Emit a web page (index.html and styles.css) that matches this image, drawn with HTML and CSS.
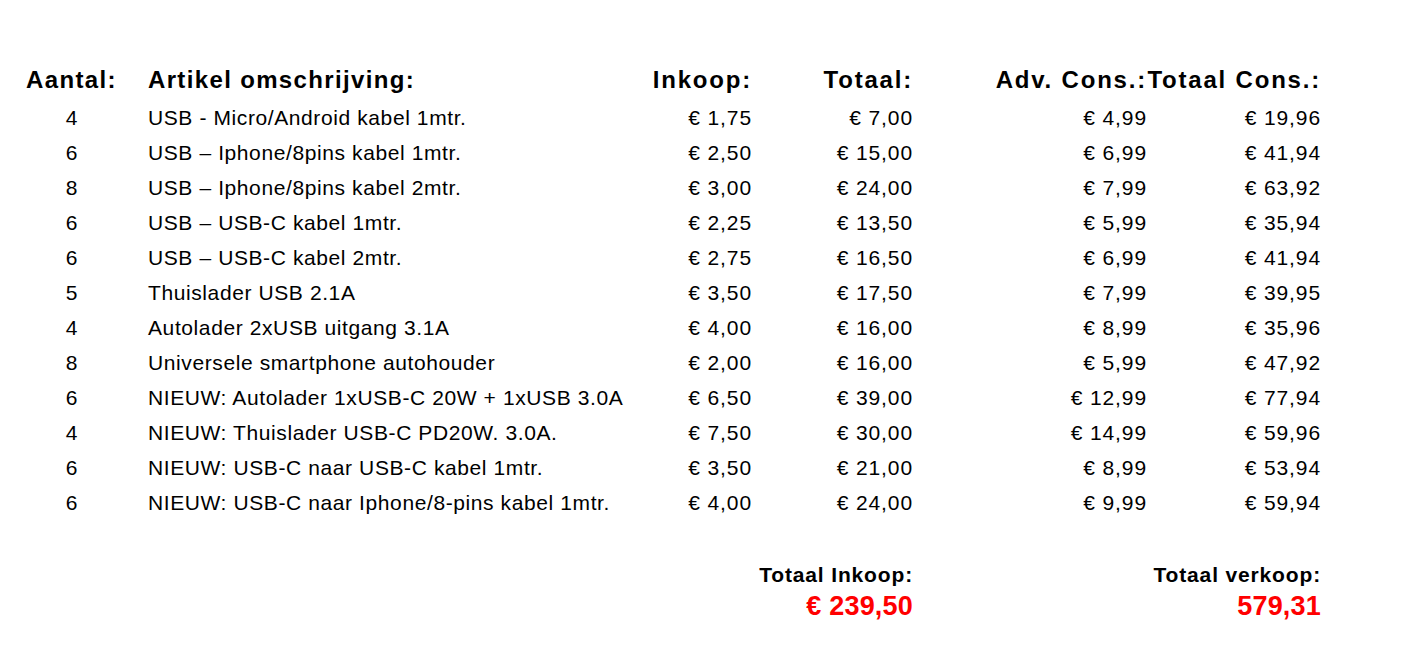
FILE: index.html
```html
<!DOCTYPE html>
<html lang="nl">
<head>
<meta charset="utf-8">
<title>Prijslijst</title>
<link rel="stylesheet" href="styles.css">
</head>
<body>
<div class="sheet">
  <div class="grid">
    <div class="hd qty-h">Aantal:</div>
    <div class="hd">Artikel omschrijving:</div>
    <div class="hd r">Inkoop:</div>
    <div class="hd r">Totaal:</div>
    <div class="hd r">Adv. Cons.:</div>
    <div class="hd r">Totaal Cons.:</div>

    <div class="c qty">4</div><div class="c">USB - Micro/Android kabel 1mtr.</div><div class="c r">€ 1,75</div><div class="c r">€ 7,00</div><div class="c r">€ 4,99</div><div class="c r">€ 19,96</div>
    <div class="c qty">6</div><div class="c">USB – Iphone/8pins kabel 1mtr.</div><div class="c r">€ 2,50</div><div class="c r">€ 15,00</div><div class="c r">€ 6,99</div><div class="c r">€ 41,94</div>
    <div class="c qty">8</div><div class="c">USB – Iphone/8pins kabel 2mtr.</div><div class="c r">€ 3,00</div><div class="c r">€ 24,00</div><div class="c r">€ 7,99</div><div class="c r">€ 63,92</div>
    <div class="c qty">6</div><div class="c">USB – USB-C kabel 1mtr.</div><div class="c r">€ 2,25</div><div class="c r">€ 13,50</div><div class="c r">€ 5,99</div><div class="c r">€ 35,94</div>
    <div class="c qty">6</div><div class="c">USB – USB-C kabel 2mtr.</div><div class="c r">€ 2,75</div><div class="c r">€ 16,50</div><div class="c r">€ 6,99</div><div class="c r">€ 41,94</div>
    <div class="c qty">5</div><div class="c">Thuislader USB 2.1A</div><div class="c r">€ 3,50</div><div class="c r">€ 17,50</div><div class="c r">€ 7,99</div><div class="c r">€ 39,95</div>
    <div class="c qty">4</div><div class="c">Autolader 2xUSB uitgang 3.1A</div><div class="c r">€ 4,00</div><div class="c r">€ 16,00</div><div class="c r">€ 8,99</div><div class="c r">€ 35,96</div>
    <div class="c qty">8</div><div class="c">Universele smartphone autohouder</div><div class="c r">€ 2,00</div><div class="c r">€ 16,00</div><div class="c r">€ 5,99</div><div class="c r">€ 47,92</div>
    <div class="c qty">6</div><div class="c clip">NIEUW: Autolader 1xUSB-C 20W + 1xUSB 3.0A</div><div class="c r">€ 6,50</div><div class="c r">€ 39,00</div><div class="c r">€ 12,99</div><div class="c r">€ 77,94</div>
    <div class="c qty">4</div><div class="c">NIEUW: Thuislader USB-C PD20W. 3.0A.</div><div class="c r">€ 7,50</div><div class="c r">€ 30,00</div><div class="c r">€ 14,99</div><div class="c r">€ 59,96</div>
    <div class="c qty">6</div><div class="c">NIEUW: USB-C naar USB-C kabel 1mtr.</div><div class="c r">€ 3,50</div><div class="c r">€ 21,00</div><div class="c r">€ 8,99</div><div class="c r">€ 53,94</div>
    <div class="c qty">6</div><div class="c">NIEUW: USB-C naar Iphone/8-pins kabel 1mtr.</div><div class="c r">€ 4,00</div><div class="c r">€ 24,00</div><div class="c r">€ 9,99</div><div class="c r">€ 59,94</div>
  </div>

  <div class="totals">
    <div class="tot tot-in">
      <div class="tot-label">Totaal Inkoop:</div>
      <div class="tot-value">€ 239,50</div>
    </div>
    <div class="tot tot-out">
      <div class="tot-label">Totaal verkoop:</div>
      <div class="tot-value">579,31</div>
    </div>
  </div>
</div>
</body>
</html>
```

FILE: styles.css
```css
html, body {
  margin: 0;
  padding: 0;
  background: #ffffff;
}
body {
  font-family: "Liberation Sans", Arial, sans-serif;
  color: #000;
}
.sheet {
  padding: 65px 0 0 26px;
}
.grid {
  display: grid;
  grid-template-columns: 122px 479px 125px 161px 234px 174px;
  grid-auto-rows: 35px;
}
.hd {
  font-weight: bold;
  font-size: 24px;
  line-height: 30px;
  letter-spacing: 1.35px;
  white-space: nowrap;
}
.hd.r {
  letter-spacing: 1.8px;
}
.c {
  font-size: 21px;
  line-height: 35px;
  letter-spacing: 0.6px;
  white-space: nowrap;
}
.c.r {
  letter-spacing: 0.9px;
}
.r {
  text-align: right;
}
.qty {
  width: 92px;
  text-align: center;
}
.clip {
  overflow: hidden;
}
.totals {
  display: grid;
  grid-template-columns: 887px 408px;
  margin-top: 40px;
}
.tot {
  text-align: right;
  font-weight: bold;
}
.tot-label {
  font-size: 21px;
  line-height: 30px;
  letter-spacing: 0.85px;
}
.tot-value {
  font-size: 27px;
  line-height: 33px;
  letter-spacing: 0.2px;
  color: #ff0000;
}
```
